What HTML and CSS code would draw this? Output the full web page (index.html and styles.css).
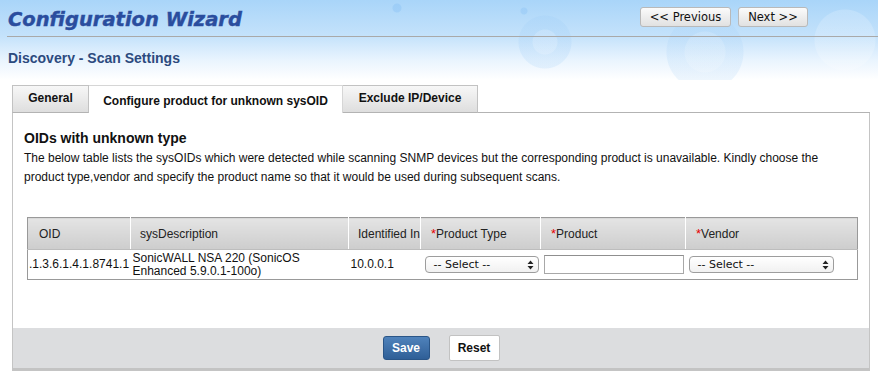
FILE: index.html
```html
<!DOCTYPE html>
<html>
<head>
<meta charset="utf-8" />
<title>Configuration Wizard</title>
<link rel="stylesheet" href="styles.css">
</head>
<body>
    <div class="top">
        <div class="titlebar">
            <h1 class="title">Configuration Wizard</h1>
            <div class="nav">
                <button class="navbtn">&lt;&lt; Previous</button>
                <button class="navbtn">Next &gt;&gt;</button>
            </div>
        </div>
        <h2 class="subtitle">Discovery - Scan Settings</h2>
    </div>

    <div class="wizard">
        <div class="tabs"><a class="tab">General</a><a class="tab active">Configure product for unknown sysOID</a><a class="tab">Exclude IP/Device</a><span class="tabrest"></span></div>
        <div class="panel">
            <div class="panel-body">
                <h3 class="heading">OIDs with unknown type</h3>
                <p class="intro">The below table lists the sysOIDs which were detected while scanning SNMP devices but the corresponding product is unavailable. Kindly choose the product type,vendor and specify the product name so that it would be used during subsequent scans.</p>
                <table class="oids">
                    <colgroup>
                        <col class="c-oid"><col class="c-desc"><col class="c-ip"><col class="c-type"><col class="c-prod"><col class="c-vendor">
                    </colgroup>
                    <thead>
                        <tr>
                            <th>OID</th>
                            <th>sysDescription</th>
                            <th>Identified In</th>
                            <th><span class="req">*</span>Product Type</th>
                            <th><span class="req">*</span>Product</th>
                            <th><span class="req">*</span>Vendor</th>
                        </tr>
                    </thead>
                    <tbody>
                        <tr>
                            <td class="oid">.1.3.6.1.4.1.8741.1</td>
                            <td class="desc">SonicWALL NSA 220 (SonicOS Enhanced 5.9.0.1-100o)</td>
                            <td class="ip">10.0.0.1</td>
                            <td class="sel"><div class="select type"><span>-- Select --</span><svg width="7" height="10" viewBox="0 0 7 10"><path d="M3.5 0.5 L6.5 4 H0.5 Z M3.5 9.5 L6.5 6 H0.5 Z" fill="#222"/></svg></div></td>
                            <td class="sel"><input class="prodname" type="text"></td>
                            <td class="sel"><div class="select vendor"><span>-- Select --</span><svg width="7" height="10" viewBox="0 0 7 10"><path d="M3.5 0.5 L6.5 4 H0.5 Z M3.5 9.5 L6.5 6 H0.5 Z" fill="#222"/></svg></div></td>
                        </tr>
                    </tbody>
                </table>
            </div>
            <div class="panel-foot">
                <button class="save">Save</button>
                <button class="reset">Reset</button>
            </div>
        </div>
    </div>
</body>
</html>
```

FILE: styles.css
```css
body{
    margin:0;
    font-family:"Liberation Sans", Arial, sans-serif;
    font-size:12px;
    color:#111;
    background:#fff;
}

/* header with the blue bubbly backdrop */
.top{
    height:80px;
    background:
        radial-gradient(circle at 545px 42px, rgba(255,255,255,0.18) 0 12px, transparent 13px),
        radial-gradient(circle at 545px 42px, rgba(150,200,245,0.18) 0 26px, transparent 27px),
        radial-gradient(circle at 705px 52px, rgba(255,255,255,0.15) 0 20px, transparent 21px),
        radial-gradient(circle at 705px 52px, rgba(160,205,245,0.18) 0 38px, transparent 39px),
        radial-gradient(circle at 397px 8px, rgba(140,195,245,0.45) 0 4px, transparent 5px),
        radial-gradient(circle at 524px 11px, rgba(140,195,245,0.4) 0 3px, transparent 4px),
        radial-gradient(circle at 845px 40px, rgba(255,255,255,0.18) 0 30px, transparent 31px),
        linear-gradient(to bottom, #a9d5f9 0%, #c4e2fb 45%, #e9f4fe 75%, #ffffff 100%);
}
.titlebar{
    height:36px;
    border-bottom:1px solid #a9a9a9;
    margin-left:7px;
    display:flex;
    justify-content:space-between;
    align-items:flex-start;
}
.title{
    margin:0;
    padding:9px 0 0 1px;
    font-family:"DejaVu Sans", Verdana, sans-serif;
    font-size:19.5px;
    font-weight:bold;
    font-style:italic;
    line-height:22px;
    color:#2a4d9e;
    -webkit-text-stroke:0.4px #2a4d9e;
}
.nav{
    display:flex;
    gap:7px;
    padding:7px 70px 0 0;
}
.navbtn{
    height:20px;
    padding:0 8px;
    font-family:"DejaVu Sans", Verdana, sans-serif;
    font-size:11.5px;
    color:#111;
    background:linear-gradient(to bottom, #fbfbfb, #e1e1e1);
    border:1px solid #b9b9b9;
    border-radius:3px;
}
.navbtn:first-child{width:91px;}
.navbtn:last-child{width:70px;}

.subtitle{
    margin:13px 0 0 8px;
    font-size:14px;
    line-height:17px;
    font-weight:bold;
    color:#2c4a7e;
}

/* tabs */
.wizard{
    margin:5px 8px 0 12px;
}
.tabs{
    display:flex;
    height:28px;
}
.tab{
    display:block;
    box-sizing:border-box;
    height:28px;
    padding:5px 0 0;
    text-align:center;
    white-space:nowrap;
    font-weight:bold;
    font-size:12px;
    line-height:15px;
    color:#111;
    background:linear-gradient(to bottom, #f7f7f7, #dedede);
    border:1px solid #c2c2c2;
    border-bottom-color:#b3b3b3;
}
.tab:first-child{width:77px;}
.tab.active{
    width:254px;
    padding-top:8px;
    background:#fff;
    border-color:#d6d6d6;
    border-bottom:none;
    border-left:none;
}
.tab:nth-child(3){width:135px; border-left:none;}
.tabrest{
    flex:1;
    border-bottom:1px solid #b3b3b3;
}

.panel{
    border:1px solid #c4c4c4;
    border-top:none;
}
.panel-body{
    padding:17px 11px 48px 11px;
}
.heading{
    margin:0;
    font-size:14px;
    line-height:17px;
    font-weight:bold;
    color:#111;
}
.intro{
    margin:2px 0 30px;
    line-height:19px;
    font-size:12px;
    color:#111;
}

/* table of oids */
.oids{
    width:830px;
    margin-left:3px;
    border-collapse:collapse;
    table-layout:fixed;
    border:1px solid #999;
}
.c-oid{width:103px;}
.c-desc{width:218px;}
.c-ip{width:72px;}
.c-type{width:120px;}
.c-prod{width:145px;}
.c-vendor{width:172px;}
.oids th{
    height:31px;
    padding:0 0 0 10px;
    text-align:left;
    font-weight:normal;
    font-size:12px;
    color:#222;
    background:linear-gradient(to bottom, #e4e4e4, #cdcdcd);
    border-left:1px solid #fff;
    border-bottom:1px solid #bdbdbd;
    white-space:nowrap;
    overflow:hidden;
}
.oids th:first-child{border-left:none; padding-left:11px;}
.oids th:nth-child(2){padding-left:9px;}
.oids th:nth-child(3){padding-left:9px;}
.req{color:#e60000; font-size:13px;}
.oids td{
    height:29px;
    padding:0 0 0 2px;
    font-size:12px;
    line-height:13px;
    color:#111;
    background:#fff;
    vertical-align:middle;
}
.oids td.oid{padding-left:1px; white-space:nowrap;}
.oids td.sel{padding-left:3px;}
.oids td.sel:nth-child(4){padding-left:4px;}

.select{
    box-sizing:border-box;
    height:17px;
    display:flex;
    align-items:center;
    justify-content:space-between;
    padding:0 4px 0 8px;
    font-family:"DejaVu Sans", Verdana, sans-serif;
    font-size:11px;
    color:#111;
    background:linear-gradient(to bottom, #ffffff, #f1f1f1);
    border:1px solid #9d9d9d;
    border-radius:4px;
}
.select.type{width:114px;}
.select.vendor{width:145px;}
.prodname{
    box-sizing:border-box;
    width:140px;
    height:19px;
    margin:0;
    border:1px solid #a8a8a8;
    border-top-color:#8f8f8f;
    background:#fff;
    display:block;
}

/* footer with save / reset */
.panel-foot{
    height:40px;
    background:#dcdddf;
    border-bottom:2px solid #c3c3c3;
    display:flex;
    justify-content:center;
    align-items:center;
    gap:19px;
}
.save{
    width:47px;
    height:24px;
    font-family:"Liberation Sans", Arial, sans-serif;
    font-weight:bold;
    font-size:12px;
    color:#fff;
    background:linear-gradient(to bottom, #4f82bb, #2f5f97);
    border:1px solid #2a5587;
    border-radius:3px;
}
.reset{
    width:51px;
    height:26px;
    font-family:"Liberation Sans", Arial, sans-serif;
    font-weight:bold;
    font-size:12px;
    color:#111;
    background:#fff;
    border:1px solid #c2c2c2;
    border-radius:2px;
}
```
